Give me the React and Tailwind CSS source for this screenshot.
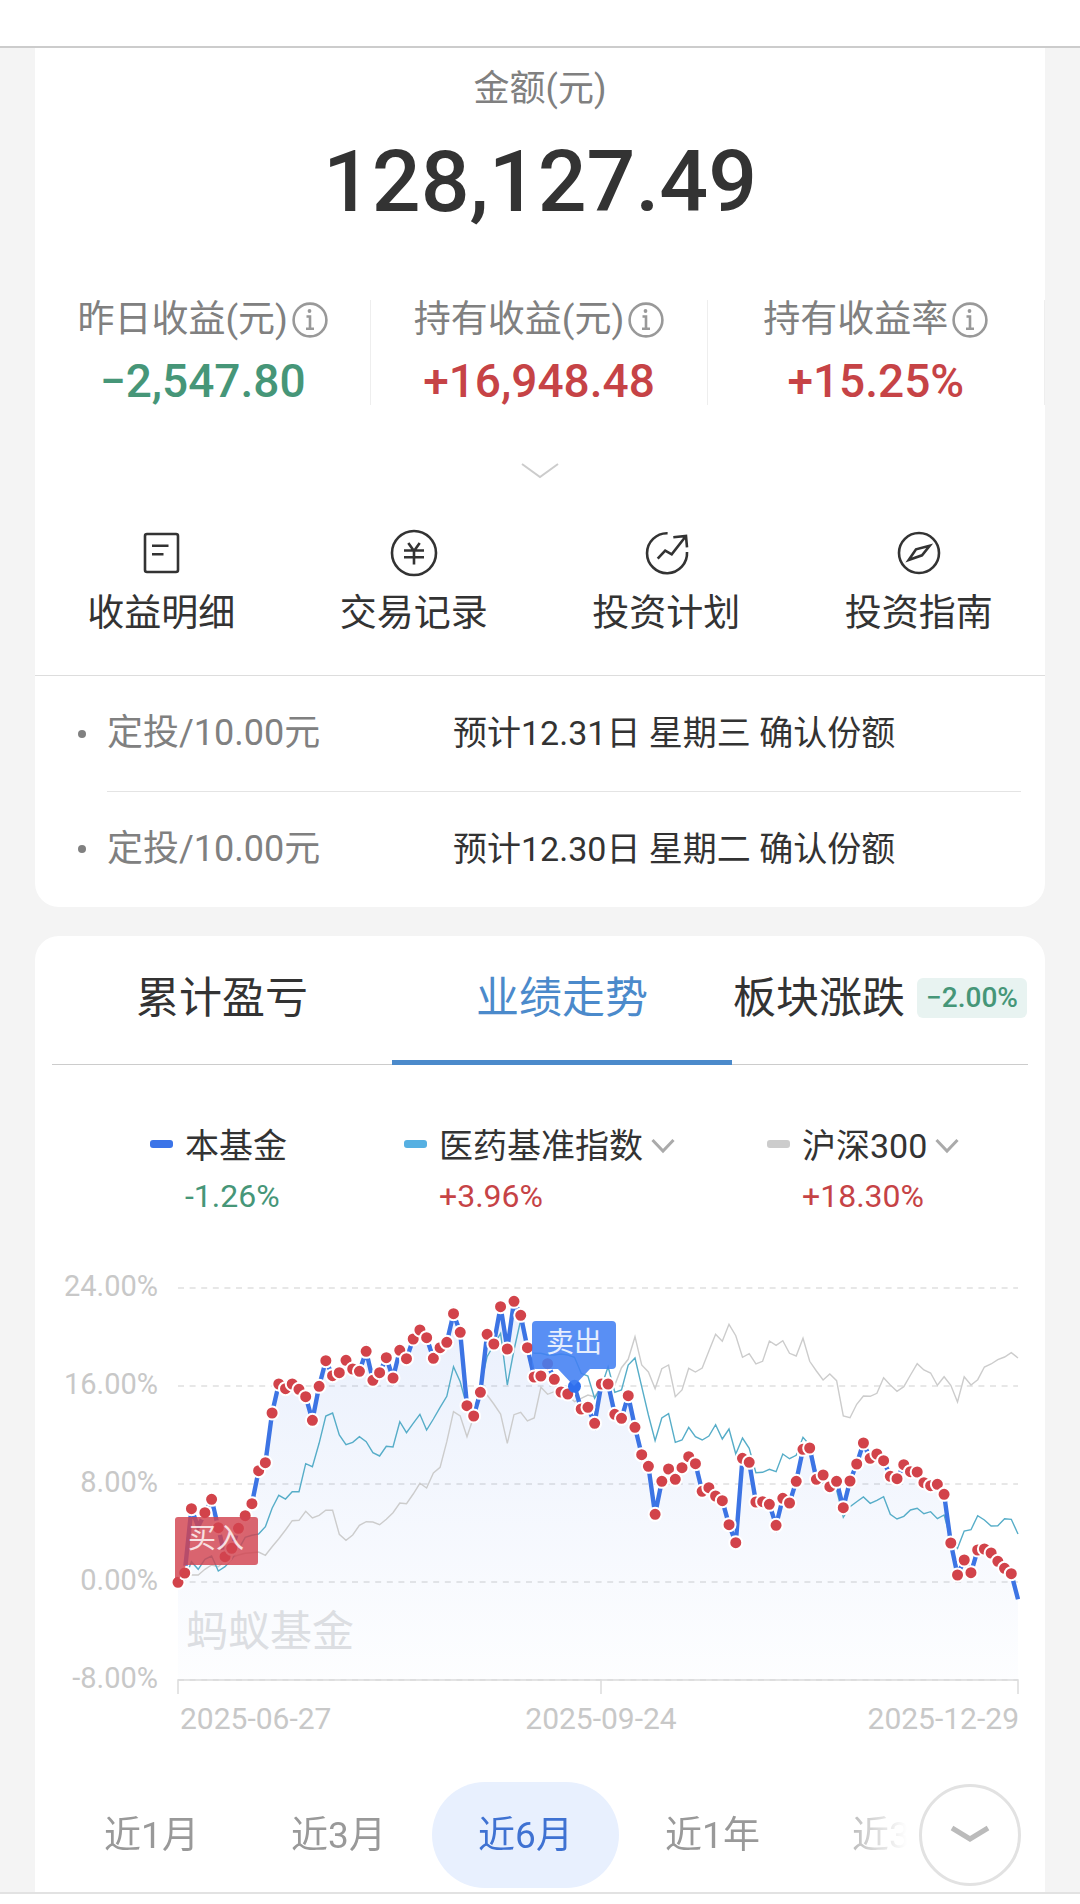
import { useState } from 'react';
import { clsx } from 'clsx';

const STATS = [
  { label: '昨日收益(元)', value: '−2,547.80', up: false },
  { label: '持有收益(元)', value: '+16,948.48', up: true },
  { label: '持有收益率', value: '+15.25%', up: true },
];

const PLANS = [
  { amount: '定投/10.00元', note: '预计12.31日 星期三 确认份额' },
  { amount: '定投/10.00元', note: '预计12.30日 星期二 确认份额' },
];

const PERIODS = ['近1月', '近3月', '近6月', '近1年', '近3年'];

// One sample per trading day, measured down from the top of the plot.
// 294 units make one 8% step, the 0% line is at 936.
const FUND = [
  937, 909, 716, 770, 728, 688, 773, 860, 835, 775, 737, 701, 602, 578, 429, 342, 356, 342, 358, 380, 451,
  349, 272, 317, 308, 271, 297, 304, 244, 331, 308, 263, 324, 241, 266, 207, 180, 203, 265, 233, 217, 131,
  187, 407, 438, 367, 193, 222, 110, 237, 94, 136, 233, 321, 318, 281, 328, 366, 372, 349, 417, 412, 460,
  342, 342, 433, 445, 377, 472, 554, 589, 733, 634, 597, 628, 593, 560, 581, 664, 653, 678, 692, 764, 818,
  565, 577, 696, 695, 703, 766, 685, 699, 634, 538, 534, 628, 615, 650, 634, 713, 633, 582, 519, 565, 552,
  572, 619, 626, 584, 605, 606, 638, 647, 643, 673, 819, 915, 870, 908, 840, 837, 849, 874, 895, 911, 988,
];

const PHARMA = [
  937, 930, 875, 898, 868, 858, 903, 890, 868, 838, 802, 796, 792, 770, 715, 676, 687, 665, 665, 581, 590,
  520, 438, 429, 495, 524, 517, 500, 515, 548, 558, 529, 531, 455, 488, 460, 433, 480, 447, 412, 379, 290,
  335, 410, 430, 350, 260, 225, 190, 345, 240, 150, 235, 250, 250, 255, 255, 252, 255, 262, 310, 318, 385,
  350, 290, 367, 360, 285, 264, 350, 435, 512, 444, 431, 517, 510, 472, 500, 510, 498, 464, 507, 477, 552,
  504, 535, 608, 607, 598, 605, 552, 566, 556, 502, 525, 610, 640, 645, 660, 742, 710, 695, 681, 700, 691,
  680, 733, 747, 739, 720, 715, 731, 725, 746, 735, 810, 835, 783, 779, 737, 750, 768, 767, 746, 748, 792,
];

const CSI300 = [
  937, 925, 915, 915, 898, 885, 890, 872, 862, 855, 850, 848, 846, 856, 830, 806, 780, 752, 751, 724, 744,
  736, 721, 721, 793, 811, 795, 766, 755, 756, 764, 748, 728, 699, 701, 672, 640, 654, 609, 592, 515, 425,
  438, 500, 440, 372, 375, 402, 432, 520, 434, 427, 453, 444, 352, 373, 365, 365, 375, 395, 385, 375, 380,
  350, 345, 345, 293, 268, 200, 285, 306, 356, 296, 285, 380, 360, 295, 306, 294, 243, 193, 214, 163, 197,
  262, 251, 282, 274, 213, 226, 212, 250, 258, 205, 274, 303, 330, 312, 332, 438, 443, 403, 378, 379, 370,
  323, 345, 364, 350, 315, 281, 300, 309, 346, 320, 346, 396, 320, 345, 329, 291, 282, 269, 261, 248, 264,
];

const LEFT = 143;
const RIGHT = 983;
const SELL_INDEX = 59;
// days without an order: no marker on the line
const UNMARKED = [3, 125];
const GRID = [
  { y: 18, label: '24.00%' },
  { y: 116, label: '16.00%' },
  { y: 214, label: '8.00%' },
  { y: 312, label: '0.00%' },
  { y: 410, label: '-8.00%' },
];

const px = (i) => LEFT + (i * (RIGHT - LEFT)) / (FUND.length - 1);
const py = (v) => v / 3;
const toPoints = (series) => series.map((v, i) => `${px(i).toFixed(1)},${py(v).toFixed(1)}`).join(' ');

function InfoIcon() {
  return (
    <svg className="size-9 shrink-0" viewBox="0 0 36 36" fill="none" stroke="#999" strokeWidth="2.6">
      <circle cx="18" cy="18" r="16.4" />
      <circle cx="17.5" cy="9" r="1.9" fill="#999" stroke="none" />
      <path d="M14.5 14.5h3.5V26M14 26.8h8" />
    </svg>
  );
}

function Chevron({ className }) {
  return (
    <svg className={className} viewBox="0 0 24 16" fill="none" stroke="currentColor" strokeWidth="3">
      <path d="M1.5 2L12 13L22.5 2" />
    </svg>
  );
}

const ACTIONS = [
  {
    label: '收益明细',
    icon: (
      <>
        <rect x="8" y="5" width="33" height="38" rx="2" />
        <path d="M15 16.7h16.5M15 25.3h11.5" />
      </>
    ),
  },
  {
    label: '交易记录',
    icon: (
      <>
        <circle cx="24" cy="24" r="22" />
        <path d="M18.3 14l5.7 8 5.7-8M14 21.5h20M14 28.2h20M24 22v13.5" />
      </>
    ),
  },
  {
    label: '投资计划',
    icon: (
      <>
        <path d="M25.6 4.2A20 20 0 1 0 45 23" />
        <path d="M15.7 29.7l7.5-8 6.5 3.6L44 7M31.3 8.3L44 7l1 11.3" />
      </>
    ),
  },
  {
    label: '投资指南',
    icon: (
      <>
        <circle cx="24" cy="24" r="20" />
        <path d="M13.7 31L21 20.3l13.7-3.6L27 26.3z" />
      </>
    ),
  },
];

function SummaryCard() {
  return (
    <section className="rounded-b-[24px] bg-white pt-[17px]">
      <p className="text-center text-[36px] leading-[48px] text-[#808080]">金额(元)</p>
      <p className="mt-[21px] text-center text-[86px] leading-[96px] font-medium text-[#333]">128,127.49</p>

      <dl className="mt-[70px] grid grid-cols-3 divide-x divide-[#eee] border-r border-[#eee]">
        {STATS.map((s) => (
          <div key={s.label} className="flex flex-col items-center gap-[17px]">
            <dt className="flex items-center gap-1 text-[37px] leading-[40px] whitespace-nowrap text-[#808080]">
              {s.label}
              <InfoIcon />
            </dt>
            <dd className={clsx('text-[46px] leading-[48px] font-medium', s.up ? 'text-[#c64346]' : 'text-[#469678]')}>
              {s.value}
            </dd>
          </div>
        ))}
      </dl>

      <button type="button" aria-label="展开" className="mx-auto mt-[54px] flex h-6 w-12 items-center justify-center text-[#ccc]">
        <svg className="h-4 w-10" viewBox="0 0 40 16" fill="none" stroke="currentColor" strokeWidth="2">
          <path d="M2 1l18 13L38 1" />
        </svg>
      </button>

      <nav className="mt-[46px] grid grid-cols-4 pb-[37px]">
        {ACTIONS.map((a) => (
          <button type="button" key={a.label} className="flex flex-col items-center gap-[13px]">
            <svg className="size-12" viewBox="0 0 48 48" fill="none" stroke="#333" strokeWidth="2.6">
              {a.icon}
            </svg>
            <span className="text-[37px] leading-[48px] text-[#333]">{a.label}</span>
          </button>
        ))}
      </nav>

      <ul className="border-t border-[#ddd] pr-6 pl-[43px]">
        {PLANS.map((p, i) => (
          <li key={p.note} className="flex items-center gap-[21px]">
            <span className="size-2 shrink-0 rounded-full bg-[#808080]" />
            <div className={clsx('flex flex-1 items-center', i > 0 && 'border-t border-[#e4e4e4]')}>
              <span className="w-[346px] text-[36px] leading-[115px] text-[#808080]">{p.amount}</span>
              <span className="text-[34px] leading-[115px] text-[#333]">{p.note}</span>
            </div>
          </li>
        ))}
      </ul>
    </section>
  );
}

function Tab({ active, children, className, onClick }) {
  return (
    <button
      type="button"
      role="tab"
      aria-selected={active}
      onClick={onClick}
      className={clsx(
        '-mb-px flex basis-0 items-center justify-center border-b-[5px] text-[43px] whitespace-nowrap',
        active ? 'border-[#4b8acb] text-[#4b8acb]' : 'border-transparent text-[#333]',
        className,
      )}
    >
      {children}
    </button>
  );
}

function LegendItem({ name, value, up, swatch, select }) {
  return (
    <div className="flex gap-3">
      <span className={clsx('mt-4 h-2 w-[23px] rounded-[3px]', swatch)} />
      <div>
        <div className="flex h-11 items-center text-[34px] whitespace-nowrap text-[#333]">
          {select ? (
            <button type="button" className="flex items-center gap-2">
              {name}
              <Chevron className="h-4 w-6 text-[#aaa]" />
            </button>
          ) : (
            name
          )}
        </div>
        <div className={clsx('mt-[6px] text-[32px] leading-[44px]', up ? 'text-[#c64346]' : 'text-[#469678]')}>{value}</div>
      </div>
    </div>
  );
}

function TrendChart() {
  const fund = toPoints(FUND);
  return (
    <svg className="mt-[52px] block w-full" viewBox="0 0 1010 470" role="img" aria-label="业绩走势">
      <defs>
        <linearGradient id="fundArea" x1="0" y1="30" x2="0" y2="410" gradientUnits="userSpaceOnUse">
          <stop offset="0" stopColor="#3b74e8" stopOpacity="0.11" />
          <stop offset="1" stopColor="#3b74e8" stopOpacity="0.01" />
        </linearGradient>
      </defs>

      {GRID.map((g) => (
        <g key={g.label}>
          <line x1={LEFT} x2={RIGHT} y1={g.y} y2={g.y} stroke="#e0e0e0" strokeWidth="1.5" strokeDasharray="6 5.6" />
          <text x="123" y={g.y + 8} textAnchor="end" className="fill-[#c8c8c8] text-[29px]">
            {g.label}
          </text>
        </g>
      ))}
      <path d={`M${LEFT} 424V410H${RIGHT}V424M566 410V424`} fill="none" stroke="#dcdcdc" strokeWidth="1.5" />

      <polygon points={`${LEFT},410 ${fund} ${RIGHT},410`} fill="url(#fundArea)" />
      <text x="151" y="376" className="fill-[#dcdee2] text-[42px]">
        蚂蚁基金
      </text>

      <polyline points={toPoints(CSI300)} fill="none" stroke="#ccc" strokeWidth="1.4" />
      <polyline points={toPoints(PHARMA)} fill="none" stroke="#56adc8" strokeWidth="1.4" />
      <polyline points={fund} fill="none" stroke="#3c74e4" strokeWidth="4.4" />
      {FUND.map(
        (v, i) =>
          !UNMARKED.includes(i) && (
            <circle
              key={i}
              cx={px(i)}
              cy={py(v)}
              r="6.5"
              fill={i === SELL_INDEX ? '#2f6fee' : '#d2434a'}
              stroke={i === SELL_INDEX ? 'none' : '#fff'}
              strokeWidth="2"
            />
          ),
      )}

      <path
        d="M144 247H220a3 3 0 0 1 3 3V292a3 3 0 0 1-3 3H151L143 312 140 308V250a3 3 0 0 1 3-3z"
        fill="#d2434f"
        fillOpacity="0.82"
      />
      <text x="181" y="278" textAnchor="middle" className="fill-white/80 text-[28px]">
        买入
      </text>

      <path
        d="M501 51H577a4 4 0 0 1 4 4V95a4 4 0 0 1-4 4H555L539 116 523 99H501a4 4 0 0 1-4-4V55a4 4 0 0 1 4-4z"
        fill="#4280f2"
        fillOpacity="0.88"
      />
      <text x="539" y="82" textAnchor="middle" className="fill-white/85 text-[28px]">
        卖出
      </text>

      <g className="fill-[#c8c8c8] text-[30px]">
        <text x="145" y="459">2025-06-27</text>
        <text x="566" y="459" textAnchor="middle">
          2025-09-24
        </text>
        <text x="984" y="459" textAnchor="end">
          2025-12-29
        </text>
      </g>
    </svg>
  );
}

function TrendCard() {
  const [tab, setTab] = useState('trend');
  const [period, setPeriod] = useState('近6月');

  return (
    <section className="rounded-t-[24px] bg-white">
      <div role="tablist" className="mx-[17px] flex h-[129px] border-b border-[#ccc]">
        <Tab className="grow-[340]" active={tab === 'profit'} onClick={() => setTab('profit')}>
          累计盈亏
        </Tab>
        <Tab className="grow-[340]" active={tab === 'trend'} onClick={() => setTab('trend')}>
          业绩走势
        </Tab>
        <Tab className="grow-[296] gap-3" active={tab === 'sector'} onClick={() => setTab('sector')}>
          板块涨跌
          <span className="rounded-md bg-[#e8f3f1] px-[9px] text-[28px] leading-[40px] font-medium text-[#469678]">
            −2.00%
          </span>
        </Tab>
      </div>

      <div className="mt-[59px] grid grid-cols-[254fr_363fr_278fr] pl-[115px]">
        <LegendItem name="本基金" value="-1.26%" swatch="bg-[#3b74e8]" />
        <LegendItem name="医药基准指数" value="+3.96%" up select swatch="bg-[#56b0e2]" />
        <LegendItem name="沪深300" value="+18.30%" up select swatch="bg-[#ccc]" />
      </div>

      <TrendChart />

      <div className="mt-[42px] flex items-center gap-3 pr-6 pb-1 pl-[23px]">
        <div className="flex flex-1 overflow-x-auto mask-r-from-90% mask-r-to-100% [scrollbar-width:none]">
          {PERIODS.map((p) => (
            <button
              type="button"
              key={p}
              onClick={() => setPeriod(p)}
              className={clsx(
                'h-[106px] w-[187px] shrink-0 rounded-full pt-[2px] text-[37px]',
                p === period ? 'bg-[#e8f0fe] text-[#3f72d2]' : 'text-[#999]',
              )}
            >
              {p}
            </button>
          ))}
        </div>
        <button
          type="button"
          aria-label="更多"
          className="flex size-[102px] shrink-0 items-center justify-center rounded-full border-[3px] border-[#e2e2e2] text-[#bbb]"
        >
          <svg className="h-5 w-10" viewBox="0 0 40 20" fill="none" stroke="currentColor" strokeWidth="5">
            <path d="M2 3l18 11L38 3" />
          </svg>
        </button>
      </div>
    </section>
  );
}

export default function App() {
  return (
    <div className="flex min-h-screen flex-col bg-[#f4f4f4] font-['Roboto','Noto_Sans_CJK_SC',sans-serif]">
      <header className="h-12 border-b-2 border-[#ccc] bg-white" />
      <main className="flex flex-col gap-[29px] px-[35px]">
        <SummaryCard />
        <TrendCard />
      </main>
      <footer className="flex-1 border-t-2 border-[#e2e2e2] bg-white" />
    </div>
  );
}
